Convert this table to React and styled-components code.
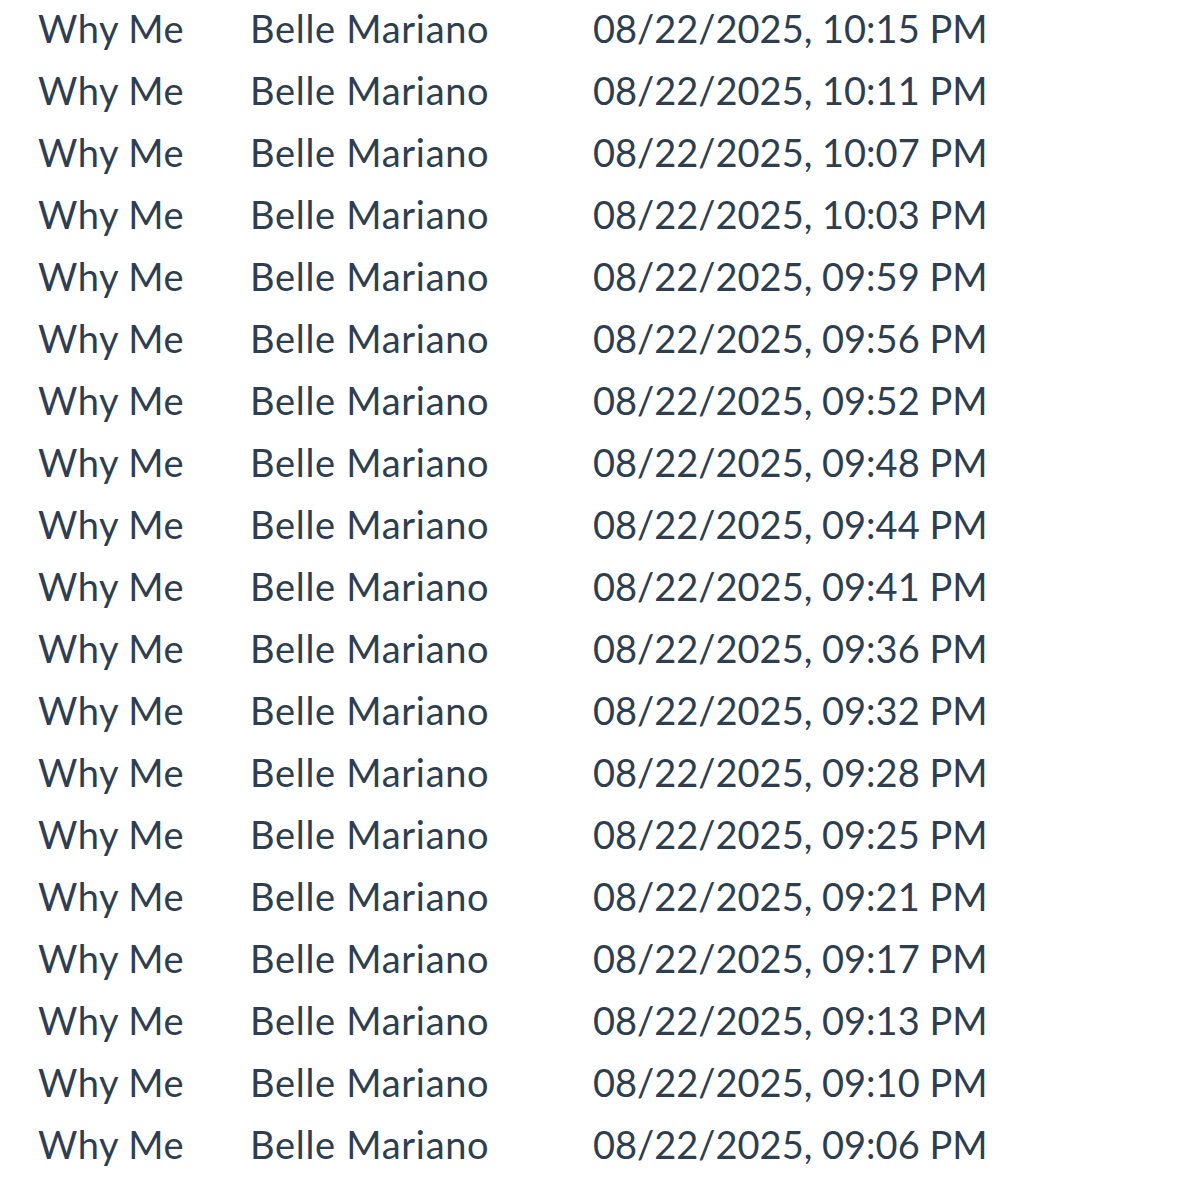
import styled, { createGlobalStyle } from "styled-components";

const GlobalStyle = createGlobalStyle`
  html, body {
    margin: 0;
    padding: 0;
    background: #ffffff;
  }
`;

const times = [
  "10:15", "10:11", "10:07", "10:03", "09:59", "09:56", "09:52", "09:48",
  "09:44", "09:41", "09:36", "09:32", "09:28", "09:25", "09:21", "09:17",
  "09:13", "09:10", "09:06",
];

export default function App() {
  return (
    <>
      <GlobalStyle />
      <Table>
        {times.map((t) => (
          <Row key={t}>
            <Cell $spacing="0.5px">Why Me</Cell>
            <Cell $spacing="0.7px">Belle Mariano</Cell>
            <Cell>08/22/2025, {t} PM</Cell>
          </Row>
        ))}
      </Table>
    </>
  );
}

const Table = styled.div`
  display: flex;
  flex-direction: column;
  padding: 0 0 0 38px;
  margin-top: -3px;
  font-family: Lato, "Liberation Sans", sans-serif;
  font-size: 38px;
  color: #2d3e50;
`;

const Row = styled.div`
  display: grid;
  grid-template-columns: 212px 343px auto;
  height: 62px;
  line-height: 62px;
  white-space: nowrap;
`;

const Cell = styled.div`
  letter-spacing: ${(p) => p.$spacing || "0"};
`;
